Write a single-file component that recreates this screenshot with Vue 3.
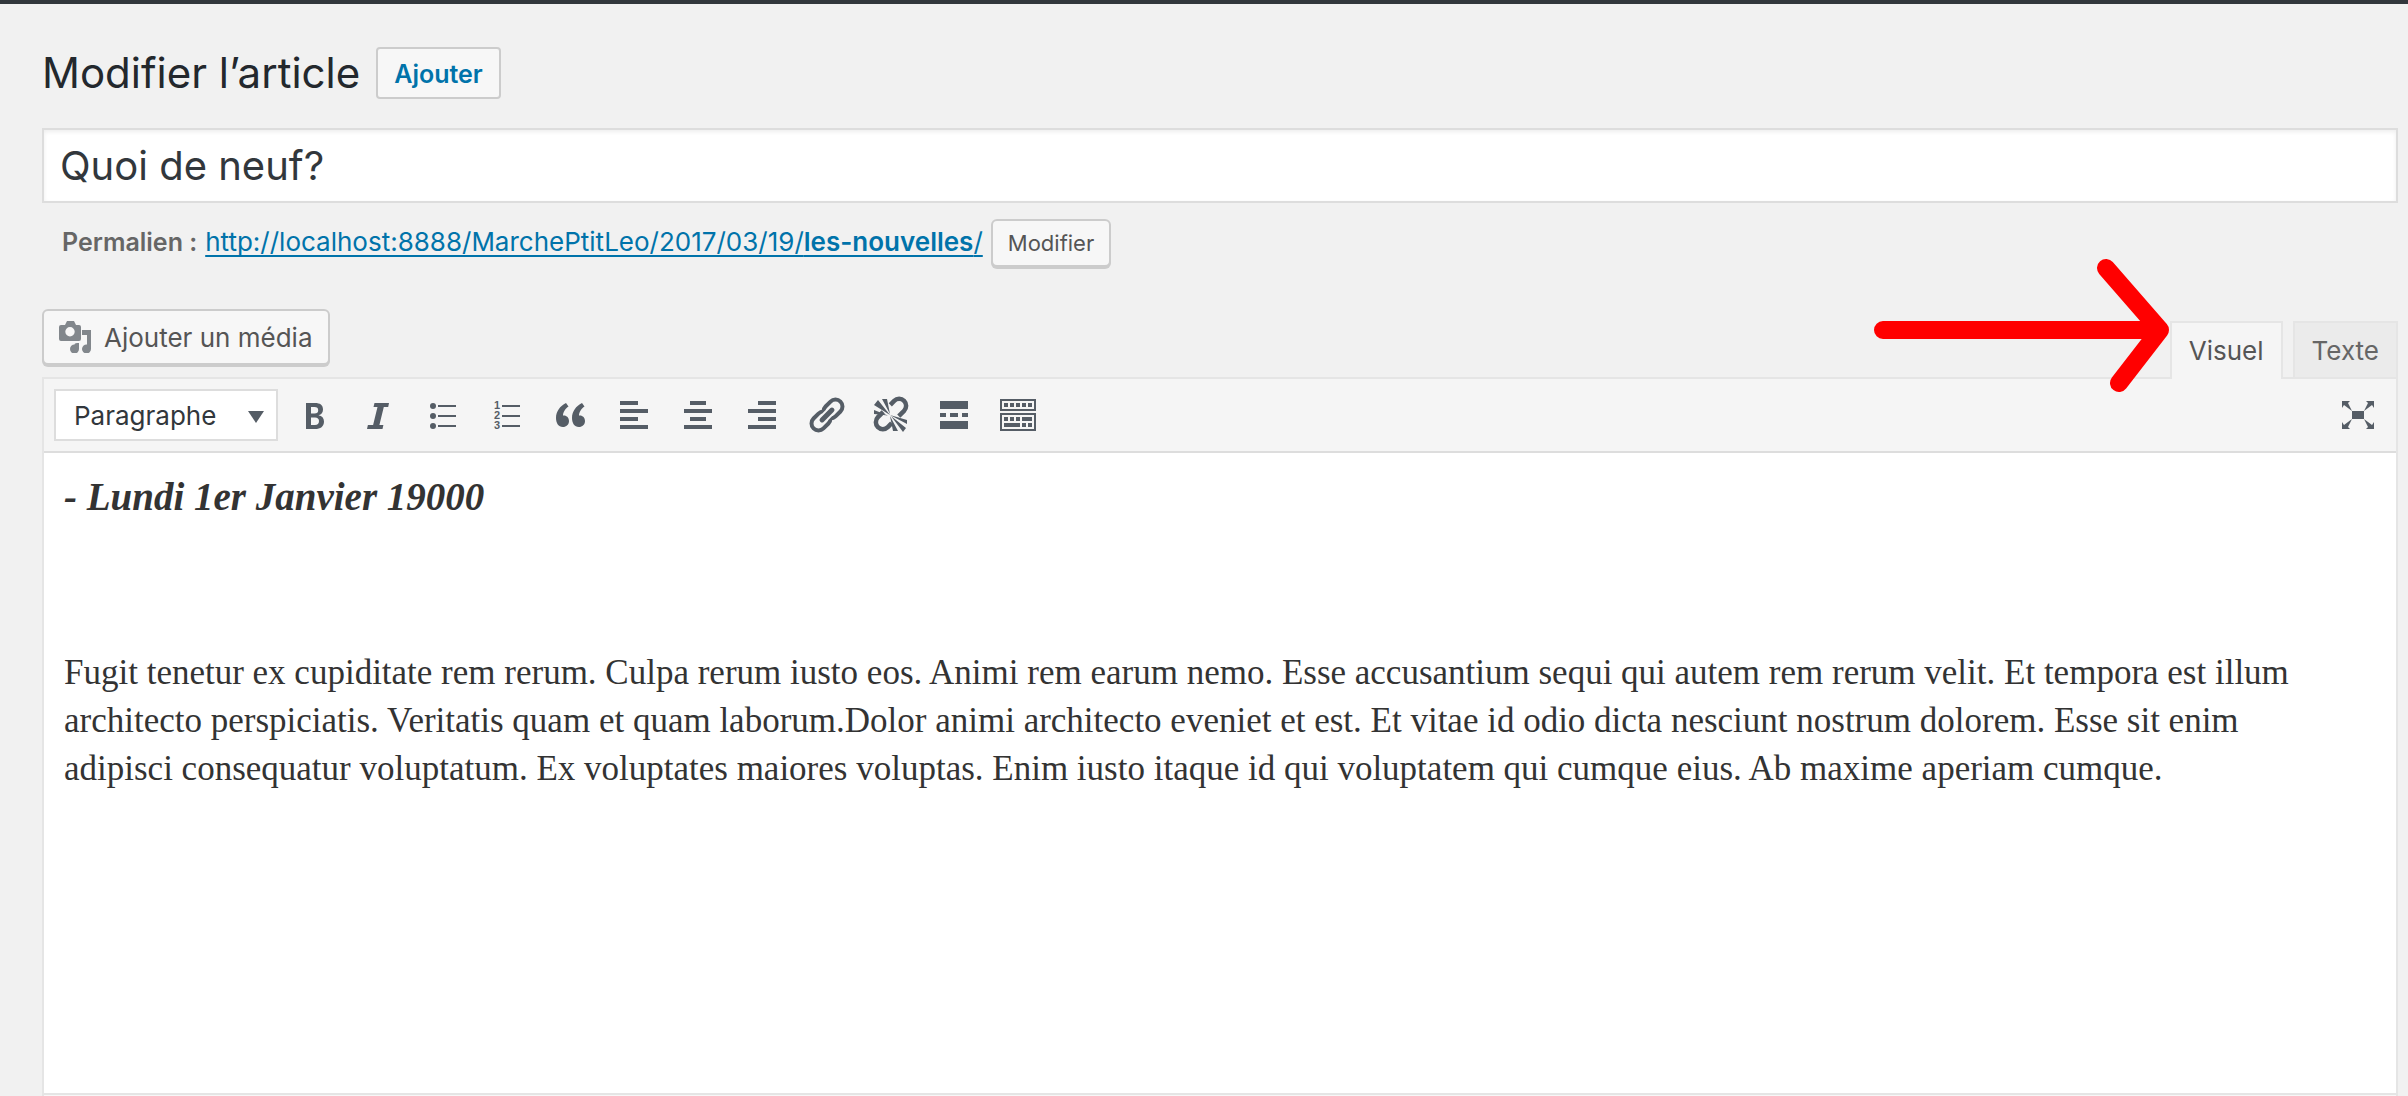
<script setup>
import { ref } from 'vue'

const title = ref('Quoi de neuf?')
const format = ref('p')
const mode = ref('visual')
</script>

<template>
  <div class="page">
    <div class="adminbar"></div>
    <main class="wrap">
      <header class="heading">
        <h1>Modifier l’article</h1>
        <a class="add" href="#">Ajouter</a>
      </header>

      <input v-model="title" class="title" type="text" aria-label="Titre" spellcheck="false" />

      <div class="permalink">
        <strong>Permalien :</strong>
        <a href="#">http://localhost:8888/MarchePtitLeo/2017/03/19/<b>les-nouvelles</b>/</a>
        <button type="button" class="btn small">Modifier</button>
      </div>

      <div class="tools">
        <button type="button" class="btn media">
          <svg width="32" height="32" viewBox="0 0 32 32" fill="#82878c" aria-hidden="true">
            <path fill-rule="evenodd" d="M2 4h4l2-4h7l2 4h3a2 2 0 0 1 2 2v12a2 2 0 0 1-2 2H2a2 2 0 0 1-2-2V6a2 2 0 0 1 2-2zM11 6a4.700 4.700 0 1 0 0 9.400A4.700 4.700 0 0 0 11 6z" />
            <path d="M23 9h9v19a4.500 4.500 0 1 1-4-4.500V14h-5z" />
            <path d="M20 22v6a4.500 4.500 0 1 1-4.500-4.500c0-1.500 2-1.500 4.500-1.500z" />
          </svg>
          Ajouter un média
        </button>
        <div class="tabs" role="tablist">
          <button type="button" role="tab" class="tab" :class="{ active: mode === 'visual' }" :aria-selected="mode === 'visual'" @click="mode = 'visual'">Visuel</button>
          <button type="button" role="tab" class="tab" :class="{ active: mode === 'text' }" :aria-selected="mode === 'text'" @click="mode = 'text'">Texte</button>
        </div>
        <svg class="arrow" width="298" height="138" viewBox="0 0 298 138" fill="none" stroke="#f00" stroke-width="18" stroke-linecap="round" stroke-linejoin="round" aria-hidden="true">
          <path d="M11 73H288M234 11L288 73L247 126" />
        </svg>
      </div>

      <section class="editor">
        <div class="toolbar" role="toolbar">
          <span class="select">
            <select v-model="format" aria-label="Format">
              <option value="p">Paragraphe</option>
              <option value="h2">Titre 2</option>
            </select>
            <svg width="16" height="12" viewBox="0 0 16 12" aria-hidden="true"><path d="M0 0h16L8 12z" /></svg>
          </span>
          <button type="button" class="tool" aria-label="Gras">
            <svg viewBox="0 0 40 40"><path fill-rule="evenodd" d="M12 8h9c5 0 8 2 8 6.500 0 3-1.500 5-4.500 5.700 3.500.7 5.500 2.800 5.500 6.300 0 5-3.500 7.500-9 7.500h-9zM17 12v6.500h3.500c2.500 0 3.700-1 3.700-3.300S23 12 20.500 12zM17 22.500v7.500h4c2.600 0 4-1.300 4-3.900 0-2.400-1.500-3.600-4-3.600z" /></svg>
          </button>
          <button type="button" class="tool" aria-label="Italique">
            <svg viewBox="0 0 40 40"><path d="M16.500 8H31l-.8 4h-4.400l-4.400 18h4l-.9 4H9l.9-4h5.200l4.400-18h-4z" /></svg>
          </button>
          <button type="button" class="tool" aria-label="Liste à puces">
            <svg viewBox="0 0 40 40"><circle cx="11" cy="11" r="3" /><circle cx="11" cy="21" r="3" /><circle cx="11" cy="31" r="3" /><path d="M16 10h18v2H16zM16 20h18v2H16zM16 30h18v2H16z" /></svg>
          </button>
          <button type="button" class="tool" aria-label="Liste numérotée">
            <svg viewBox="0 0 40 40"><text x="8" y="14">1</text><text x="8" y="24">2</text><text x="8" y="34">3</text><path d="M16 10h18v2H16zM16 20h18v2H16zM16 30h18v2H16z" /></svg>
          </button>
          <button type="button" class="tool" aria-label="Citation">
            <svg viewBox="0 0 40 40"><path d="M16 8l2.500 3.500C15.500 13.500 13 17 13 20.500c3.500-.5 6 2 6 5.500s-2.500 6-6.200 6C8.500 32 6 28 6 23c0-6.500 4-12 10-15z" /><path d="M32 8l2.500 3.500C31.500 13.500 29 17 29 20.500c3.500-.5 6 2 6 5.500s-2.500 6-6.200 6C24.500 32 22 28 22 23c0-6.500 4-12 10-15z" /></svg>
          </button>
          <button type="button" class="tool" aria-label="Aligner à gauche">
            <svg viewBox="0 0 40 40"><path d="M6 6h18v4H6zM6 14h28v4H6zM6 22h18v4H6zM6 30h28v4H6z" /></svg>
          </button>
          <button type="button" class="tool" aria-label="Centrer">
            <svg viewBox="0 0 40 40"><path d="M12 6h16v4H12zM6 14h28v4H6zM12 22h16v4H12zM6 30h28v4H6z" /></svg>
          </button>
          <button type="button" class="tool" aria-label="Aligner à droite">
            <svg viewBox="0 0 40 40"><path d="M16 6h18v4H16zM6 14h28v4H6zM16 22h18v4H16zM6 30h28v4H6z" /></svg>
          </button>
          <button type="button" class="tool" aria-label="Insérer un lien">
            <svg viewBox="0 0 40 40">
              <g transform="rotate(-45 21 20)" fill="none" stroke="#555d66" stroke-width="4">
                <rect x="2" y="13" width="21" height="14" rx="7" />
                <rect x="19" y="13" width="21" height="14" rx="7" />
                <path stroke="#f5f5f5" stroke-width="9" d="M13 20h16" />
                <path stroke-width="5" stroke-linecap="round" d="M14 20h14" />
              </g>
            </svg>
          </button>
          <button type="button" class="tool" aria-label="Supprimer le lien">
            <svg viewBox="0 0 40 40">
              <g transform="rotate(-45 21 19)" fill="none" stroke="#555d66" stroke-width="4.500">
                <path d="M15 26H9.500a7 7 0 0 1 0-14H17M25 26h7.500a7 7 0 0 0 0-14H27" />
              </g>
              <path stroke="#f5f5f5" stroke-width="1" d="M4 4l17 16 16 17" fill="none" />
              <path d="M4 10l4-5 12 15zM12 4h5l3 15zM4 15v4l14 1.500zM20 20l17 5v4zM21 21l15 12-3 4zM20 21l8 15h-5z" />
            </svg>
          </button>
          <button type="button" class="tool" aria-label="Insérer la balise Lire la suite">
            <svg viewBox="0 0 40 40"><path d="M6 6h28v8H6zM6 18h6v4H6zM16 18h8v4h-8zM28 18h6v4h-6zM6 26h28v8H6z" /></svg>
          </button>
          <button type="button" class="tool" aria-label="Ouvrir/fermer la barre d’outils">
            <svg viewBox="0 0 40 40"><path fill="none" stroke="#555d66" stroke-width="2" d="M3 5h34v10H3zM3 19h34v16H3z" /><path d="M6 8h4v4H6zM12 8h4v4h-4zM18 8h4v4h-4zM24 8h4v4h-4zM30 8h4v4h-4zM6 22h4v4H6zM12 22h4v4h-4zM18 22h4v4h-4zM24 22h10v4H24zM6 28h16v4H6zM24 28h4v4h-4zM30 28h4v4h-4z" /></svg>
          </button>
          <button type="button" class="tool full" aria-label="Mode sans distraction">
            <svg viewBox="0 0 40 40"><path d="M14 16h12v8H14zM4 6h8l-2 2 4 8-8-6-2 3zM36 6h-8l2 2-4 8 8-6 2 3zM4 34h8l-2-2 4-8-8 6-2-3zM36 34h-8l2-2-4-8 8 6 2-3z" /></svg>
          </button>
        </div>
        <div class="content" contenteditable="true" spellcheck="false" role="textbox" aria-multiline="true" aria-label="Contenu">
          <p class="date">- Lundi 1er Janvier 19000</p>
          <p><br /></p>
          <p>
            Fugit tenetur ex cupiditate rem rerum. Culpa rerum iusto eos. Animi rem earum nemo. Esse accusantium sequi qui autem rem rerum velit. Et tempora est illum architecto perspiciatis. Veritatis quam et quam laborum.Dolor animi architecto eveniet et est. Et vitae id odio dicta nesciunt nostrum dolorem. Esse sit enim adipisci consequatur voluptatum. Ex voluptates maiores voluptas. Enim iusto itaque id qui voluptatem qui cumque eius. Ab maxime aperiam cumque.
          </p>
        </div>
        <div class="status"></div>
      </section>
    </main>
  </div>
</template>

<style>
body {
  margin: 0;
  background: #f1f1f1;
}
</style>

<style scoped>
* {
  box-sizing: border-box;
}
.page {
  display: flex;
  flex-direction: column;
  min-height: 100vh;
  font-family: Inter, "Liberation Sans", sans-serif;
  font-size: 26px;
  color: #444;
}
button,
input,
select {
  font-family: inherit;
  margin: 0;
}
.adminbar {
  height: 4px;
  background: #32373c;
}
.wrap {
  flex: 1;
  display: flex;
  flex-direction: column;
  padding: 43px 10px 0 42px;
}
.heading {
  display: flex;
  align-items: center;
  gap: 16px;
}
h1 {
  margin: 0;
  font-size: 42px;
  line-height: 52px;
  font-weight: 400;
  color: #23282d;
}
.add {
  height: 52px;
  padding: 0 16px;
  border: 2px solid #ccc;
  border-radius: 4px;
  background: #f7f7f7;
  color: #0073aa;
  font-size: 25px;
  font-weight: 600;
  line-height: 50px;
  text-decoration: none;
}
.title {
  width: 100%;
  height: 75px;
  margin-top: 29px;
  padding: 0 16px;
  border: 2px solid #ddd;
  background: #fff;
  box-shadow: inset 0 2px 4px rgba(0, 0, 0, 0.07);
  color: #32373c;
  font-size: 40px;
}
.permalink {
  display: flex;
  align-items: baseline;
  gap: 8px;
  margin-top: 16px;
  padding-left: 20px;
}
.permalink strong {
  color: #666;
  font-size: 25px;
  font-weight: 600;
}
.permalink a {
  color: #0073aa;
  text-decoration: underline 2px;
  text-decoration-skip-ink: none;
  text-underline-offset: 4px;
}
.permalink b {
  font-weight: 600;
}
.btn {
  display: flex;
  align-items: center;
  border: 2px solid #ccc;
  border-radius: 6px;
  background: #f7f7f7;
  box-shadow: 0 2px 0 #ccc;
  color: #555;
}
.small {
  height: 48px;
  padding: 0 15px;
  font-size: 22px;
}
.tools {
  position: relative;
  display: flex;
  justify-content: space-between;
  margin-top: 42px;
}
.media {
  height: 56px;
  padding: 0 15px;
  gap: 13px;
  font-size: 26px;
}
.tabs {
  display: flex;
  gap: 10px;
  margin-top: 12px;
}
.tab {
  height: 56px;
  padding: 0 17px;
  border: 2px solid #e5e5e5;
  border-bottom: 0;
  background: #ebebeb;
  color: #666;
  font-size: 26px;
}
.tab.active {
  height: 58px;
  margin-bottom: -2px;
  padding-bottom: 2px;
  background: #f5f5f5;
  color: #555;
  z-index: 1;
}
.arrow {
  position: absolute;
  right: 228px;
  top: -52px;
  z-index: 2;
}
.editor {
  flex: 1;
  display: flex;
  flex-direction: column;
  border: 2px solid #e5e5e5;
  border-bottom: 0;
}
.toolbar {
  display: flex;
  align-items: center;
  gap: 24px;
  padding: 10px 18px 10px 10px;
  border-bottom: 2px solid #ddd;
  background: #f5f5f5;
}
.select {
  position: relative;
  margin-right: -8px;
}
.select select {
  display: block;
  width: 224px;
  height: 52px;
  padding: 0 18px;
  appearance: none;
  border: 2px solid #ddd;
  border-radius: 0;
  background: #fff;
  color: #32373c;
  font-size: 26px;
}
.select svg {
  position: absolute;
  right: 14px;
  top: 22px;
  fill: #555d66;
  pointer-events: none;
}
.tool {
  padding: 0;
  border: 0;
  background: none;
}
.tool svg {
  display: block;
  width: 40px;
  height: 40px;
  fill: #555d66;
}
.tool text {
  font: 700 11px "Liberation Sans", sans-serif;
}
.full {
  margin-left: auto;
}
.content {
  flex: 1;
  padding: 20px 60px 20px 20px;
  background: #fff;
  color: #333;
  font-family: Georgia, "Liberation Serif", serif;
  font-size: 35px;
  line-height: 48px;
}
.content p {
  margin: 0 0 40px;
}
.content .date {
  font-size: 39px;
  font-style: italic;
  font-weight: 700;
}
.status {
  min-height: 3px;
  border-top: 2px solid #e5e5e5;
  background: #f7f7f7;
}
</style>
